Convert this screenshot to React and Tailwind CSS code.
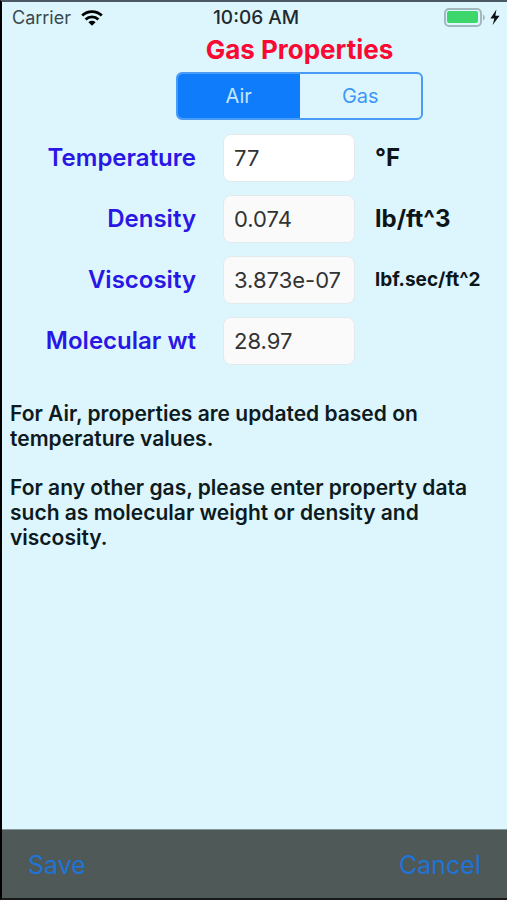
import React, { useState } from "react";

const FIELDS = [
  { id: "temperature", label: "Temperature", value: "77", unit: "°F" },
  { id: "density", label: "Density", value: "0.074", unit: "lb/ft^3", computed: true },
  { id: "viscosity", label: "Viscosity", value: "3.873e-07", unit: "lbf.sec/ft^2", computed: true, smallUnit: true },
  { id: "molecular-wt", label: "Molecular wt", value: "28.97", unit: "", computed: true },
];

function WifiIcon() {
  return (
    <svg viewBox="0 0 22 16" className="h-4 w-[22px]" fill="none" stroke="currentColor" strokeWidth="2.8" aria-hidden="true">
      <path d="M1.2 5.6a14 14 0 0 1 19.6 0" />
      <path d="M4.6 9.4a9.2 9.2 0 0 1 12.8 0" />
      <path d="M11 15.8l-3.6-3.6a5.2 5.2 0 0 1 7.2 0z" fill="currentColor" stroke="none" />
    </svg>
  );
}

function BatteryIcon() {
  return (
    <svg viewBox="0 0 56 20" className="h-5 w-14" aria-hidden="true">
      <rect x="1" y="1" width="36" height="17" rx="4" fill="none" stroke="#a3b8bd" strokeWidth="2" />
      <rect x="3" y="3" width="31" height="12" rx="2" fill="#3dd66b" />
      <path d="M39 6.5c2.4 1 2.4 5 0 6z" fill="#a3b8bd" />
      <path d="M52.4 1.5L46.4 10.6h4L48.6 17l7-9.2h-4.2z" fill="#0c1114" />
    </svg>
  );
}

function StatusBar() {
  return (
    <div className="grid h-8 grid-cols-[1fr_auto_1fr] items-center pr-[7px] pl-2.5 text-lg text-[#1d2a2f]">
      <div className="flex items-center gap-2.5">
        <span className="text-[#3b484d]">Carrier</span>
        <span className="text-black"><WifiIcon /></span>
      </div>
      <span className="text-[19px] font-medium">10:06 AM</span>
      <div className="flex justify-end"><BatteryIcon /></div>
    </div>
  );
}

export default function App() {
  const [gasType, setGasType] = useState("Air");
  const [values, setValues] = useState(Object.fromEntries(FIELDS.map(f => [f.id, f.value])));

  return (
    <div className="flex min-h-screen flex-col border-t-2 border-b-2 border-l-2 border-t-[#4d5963] border-b-[#17191b] border-l-black bg-[#ddf6fe] font-['Inter',sans-serif]">
      <StatusBar />

      <header className="flex flex-col pl-[174px]">
        <div className="w-[247px]">
          <h1 className="text-center text-[26px] leading-8 font-bold text-[#f80a33]">Gas Properties</h1>
          <div className="mt-1.5 grid h-12 grid-cols-2 overflow-hidden rounded-md border-2 border-[#4a9bf5] text-xl">
            {["Air", "Gas"].map(type => (
              <button
                key={type}
                type="button"
                aria-pressed={gasType === type}
                onClick={() => setGasType(type)}
                className={gasType === type ? "bg-[#0f7cfb] text-[#c5e6fd]" : "text-[#4096f4]"}
              >
                {type}
              </button>
            ))}
          </div>
        </div>
      </header>

      <form className="mt-3.5 flex flex-col gap-[13px]">
        {FIELDS.map(f => (
          <div key={f.id} className="grid grid-cols-[201fr_132fr_132fr] items-center gap-x-5">
            <label htmlFor={f.id} className="pr-[7px] text-right text-2xl font-semibold text-[#2a17e6]">{f.label}</label>
            <input
              id={f.id}
              type="text"
              readOnly={Boolean(f.computed)}
              value={values[f.id]}
              onChange={e => setValues({ ...values, [f.id]: e.target.value })}
              className={`h-12 w-full min-w-0 rounded-lg border border-[#e3eaee] pl-2.5 text-[22px] text-[#333333] outline-none ${f.computed ? "bg-[#fafafa]" : "bg-white"}`}
            />
            <span className={`font-bold text-[#0d1518] ${f.smallUnit ? "text-[19px]" : "text-2xl"}`}>{f.unit}</span>
          </div>
        ))}
      </form>

      <div className="mt-9 flex flex-col gap-6 px-2 text-[21px] leading-[25px] font-semibold text-[#0d1a20]">
        <p>For Air, properties are updated based on temperature values.</p>
        <p>For any other gas, please enter property data such as molecular weight or density and viscosity.</p>
      </div>

      <footer className="mt-auto flex h-[69px] items-center justify-between border-t border-[#84979b] bg-[#4e5958] px-[26px] pt-1 text-[25px] text-[#1f74d6]">
        <button type="button">Save</button>
        <button type="button">Cancel</button>
      </footer>
    </div>
  );
}
